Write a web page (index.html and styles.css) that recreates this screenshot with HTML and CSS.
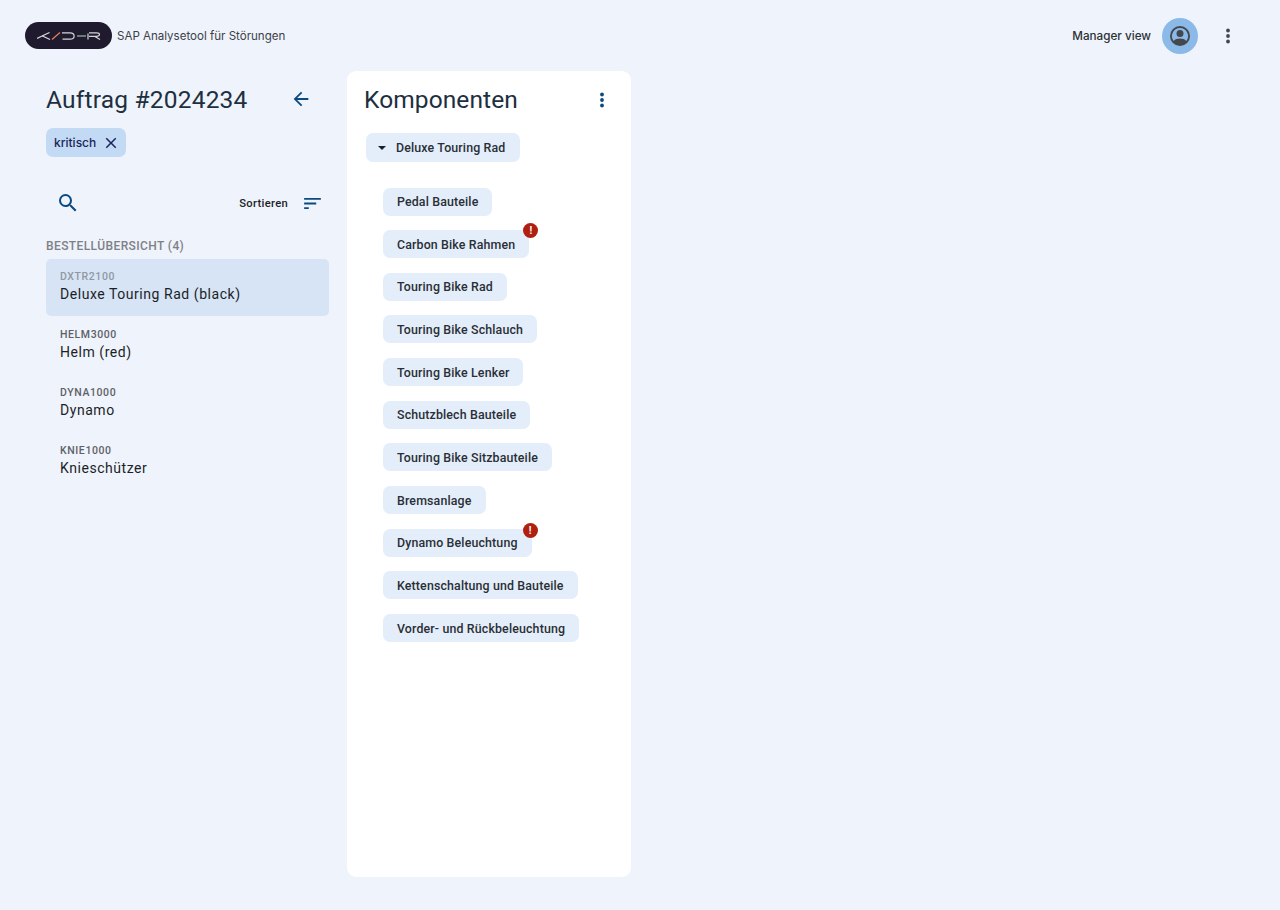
FILE: index.html
```html
<!DOCTYPE html>
<html lang="de">
<head>
<meta charset="utf-8">
<title>SAP Analysetool für Störungen</title>
<link rel="stylesheet" href="styles.css">
</head>
<body>
<header class="topbar">
  <div class="brand">
    <div class="logo">
      <svg width="64" height="8" viewBox="0 0 64 8" fill="none" stroke-width="1.200">
        <path d="M0 6.500 12.500.5M5 3.800 13 7.500" stroke="#d3d5db"/>
        <path d="M15 7.500 23 .5" stroke="#e0815f"/>
        <path d="M25 .8H33C38.500.8 38.500 7.200 33 7.200H25.500" stroke="#d3d5db"/>
        <path d="M40 4H49" stroke="#8fc2a8"/>
        <path d="M51 1.500V7.500M52 .8H59.500C63.500.8 63.500 4.300 59.500 4.300H52M57.500 4.300 63 7.500" stroke="#d3d5db"/>
      </svg>
    </div>
    <span class="app-title">SAP Analysetool für Störungen</span>
  </div>
  <div class="user">
    <span class="user-label">Manager view</span>
    <div class="avatar">
      <svg width="24" height="24" viewBox="0 0 24 24"><path fill="#44474e" d="M12 2a10 10 0 1 0 0 20 10 10 0 0 0 0-20zm0 2a8 8 0 0 1 6.300 12.900C16.800 15.100 14.500 14.400 12 14.400s-4.800.7-6.300 2.500A8 8 0 0 1 12 4zm0 2a3.500 3.500 0 1 0 0 7 3.500 3.500 0 0 0 0-7z"/></svg>
    </div>
    <svg class="menu-dots" width="24" height="24" viewBox="0 0 24 24"><circle cx="12" cy="6.500" r="1.900" fill="#44474e"/><circle cx="12" cy="12" r="1.900" fill="#44474e"/><circle cx="12" cy="17.500" r="1.900" fill="#44474e"/></svg>
  </div>
</header>
<main class="content">
  <section class="orders">
    <div class="order-head">
      <h1 class="order-title">Auftrag #2024234</h1>
      <svg class="back" width="22" height="22" viewBox="0 0 24 24"><path fill="#0b4a80" d="M20 11H7.800l5.600-5.600L12 4l-8 8 8 8 1.400-1.400L7.800 13H20z"/></svg>
    </div>
    <div class="tag">
      <span>kritisch</span>
      <svg width="18" height="18" viewBox="0 0 24 24"><path fill="#1c2559" d="M19 6.400 17.600 5 12 10.600 6.400 5 5 6.400 10.600 12 5 17.600 6.400 19 12 13.400 17.600 19 19 17.600 13.400 12z"/></svg>
    </div>
    <div class="tools">
      <svg width="24" height="24" viewBox="0 0 24 24"><path fill="#0b4a80" d="M15.500 14h-.79l-.28-.27A6.471 6.471 0 0 0 16 9.500 6.500 6.500 0 1 0 9.500 16c1.610 0 3.090-.59 4.230-1.570l.27.28v.79l5 4.990L20.490 19l-4.990-5zm-6 0C7.010 14 5 11.990 5 9.500S7.010 5 9.500 5 14 7.010 14 9.500 11.990 14 9.500 14z"/></svg>
      <div class="sort">
        <span>Sortieren</span>
        <svg width="17" height="13" viewBox="0 0 18 14"><path fill="#0b4a80" d="M0 1h18v2H0zM0 6h13v2H0zM0 11h5v2H0z"/></svg>
      </div>
    </div>
    <div class="list-label">BESTELLÜBERSICHT (4)</div>
    <ul class="order-list">
      <li class="order selected"><small>DXTR2100</small><span>Deluxe Touring Rad (black)</span></li>
      <li class="order"><small>HELM3000</small><span>Helm (red)</span></li>
      <li class="order"><small>DYNA1000</small><span>Dynamo</span></li>
      <li class="order"><small>KNIE1000</small><span>Knieschützer</span></li>
    </ul>
  </section>
  <section class="panel">
    <div class="panel-head">
      <h2 class="panel-title">Komponenten</h2>
      <svg width="24" height="24" viewBox="0 0 24 24"><circle cx="12" cy="7.500" r="1.900" fill="#0b4a80"/><circle cx="12" cy="13" r="1.900" fill="#0b4a80"/><circle cx="12" cy="18.500" r="1.900" fill="#0b4a80"/></svg>
    </div>
    <div class="chip root"><i class="caret"></i>Deluxe Touring Rad</div>
    <ul class="chips">
      <li class="chip">Pedal Bauteile</li>
      <li class="chip">Carbon Bike Rahmen<b class="alert">!</b></li>
      <li class="chip">Touring Bike Rad</li>
      <li class="chip">Touring Bike Schlauch</li>
      <li class="chip">Touring Bike Lenker</li>
      <li class="chip">Schutzblech Bauteile</li>
      <li class="chip">Touring Bike Sitzbauteile</li>
      <li class="chip">Bremsanlage</li>
      <li class="chip">Dynamo Beleuchtung<b class="alert alert-low">!</b></li>
      <li class="chip">Kettenschaltung und Bauteile</li>
      <li class="chip">Vorder- und Rückbeleuchtung</li>
    </ul>
  </section>
</main>
</body>
</html>
```
FILE: styles.css
```css
* { box-sizing: border-box; }
html, body { margin: 0; height: 100%; }
body { background: #eff3fb; font-family: Roboto, "Liberation Sans", sans-serif; color: #1b1f27; height: 910px; overflow: hidden; }
ul { list-style: none; margin: 0; padding: 0; }
h1, h2 { margin: 0; font-weight: 400; color: #1d2f40; }

.topbar { height: 71px; display: flex; justify-content: space-between; align-items: center; padding: 0 40px 0 25px; }
.brand { display: flex; align-items: center; gap: 5px; }
.logo { width: 87px; height: 27px; background: #1f1a2e; border-radius: 14px; padding-left: 12px; display: flex; align-items: center; }
.app-title { font-family: Inter, sans-serif; font-size: 11.550px; color: #3c4148; }
.user { display: flex; align-items: center; }
.user-label { font-family: Inter, sans-serif; font-size: 11.700px; font-weight: 500; color: #2c3036; margin-right: 11px; }
.avatar { width: 36px; height: 36px; border-radius: 50%; background: #8bb9e8; display: flex; align-items: center; justify-content: center; margin-right: 18px; }

.content { display: flex; align-items: flex-start; padding-left: 46px; gap: 18px; }
.orders { width: 283px; }
.order-head { display: flex; align-items: center; justify-content: space-between; height: 56px; padding-right: 17px; }
.order-title { font-size: 24.500px; letter-spacing: .2px; }
.tag { display: inline-flex; align-items: center; gap: 6px; height: 29px; margin-top: 1px; padding: 0 6px 0 8px; background: #c3daf4; border-radius: 7px; font-family: Inter, sans-serif; font-size: 12px; font-weight: 500; color: #1c2559; }
.tools { display: flex; align-items: center; justify-content: space-between; margin-top: 32px; height: 28px; padding: 0 8px 0 10px; }
.sort { display: flex; align-items: center; gap: 16px; font-size: 11.200px; font-weight: 500; letter-spacing: .3px; }
.list-label { margin-top: 21px; font-size: 12px; line-height: 16px; color: #7d8187; letter-spacing: .4px; font-weight: 500; }
.order-list { margin-top: 5px; }
.order { height: 58px; padding: 10px 14px 0; display: flex; flex-direction: column; }
.order small { font-size: 10.500px; line-height: 15px; font-weight: 500; letter-spacing: .6px; color: #5d6167; }
.order span { font-size: 14px; line-height: 21px; letter-spacing: .55px; }
.selected { height: 57px; margin-bottom: 1px; background: #d6e4f5; border-radius: 5px; }
.selected small { color: #9098a3; }

.panel { width: 284px; height: 806px; background: #fff; border-radius: 9px; padding: 0 17px; }
.panel-head { display: flex; align-items: center; justify-content: space-between; height: 56px; }
.panel-title { font-size: 24.500px; letter-spacing: .1px; }
.chip { position: relative; display: inline-flex; align-items: center; height: 28px; padding: 0 14px; background: #e4eefa; border-radius: 7px; font-size: 12.400px; font-weight: 500; letter-spacing: .14px; color: #2a2e36; }
.root { margin: 6px 0 0 2px; padding: 0 15px 0 12px; height: 29px; }
.caret { width: 0; height: 0; margin-right: 10px; border: 4px solid transparent; border-top-color: #1b1f27; border-bottom: 0; }
.chips { margin: 25.500px 0 0 19px; display: flex; flex-direction: column; align-items: flex-start; gap: 14.660px; }
.alert { position: absolute; top: -7px; right: -9px; width: 15px; height: 15px; border-radius: 50%; background: #b02010; color: #fff; font-size: 10px; font-weight: 700; line-height: 15px; text-align: center; }
.alert-low { top: -6px; right: -6px; }
```
